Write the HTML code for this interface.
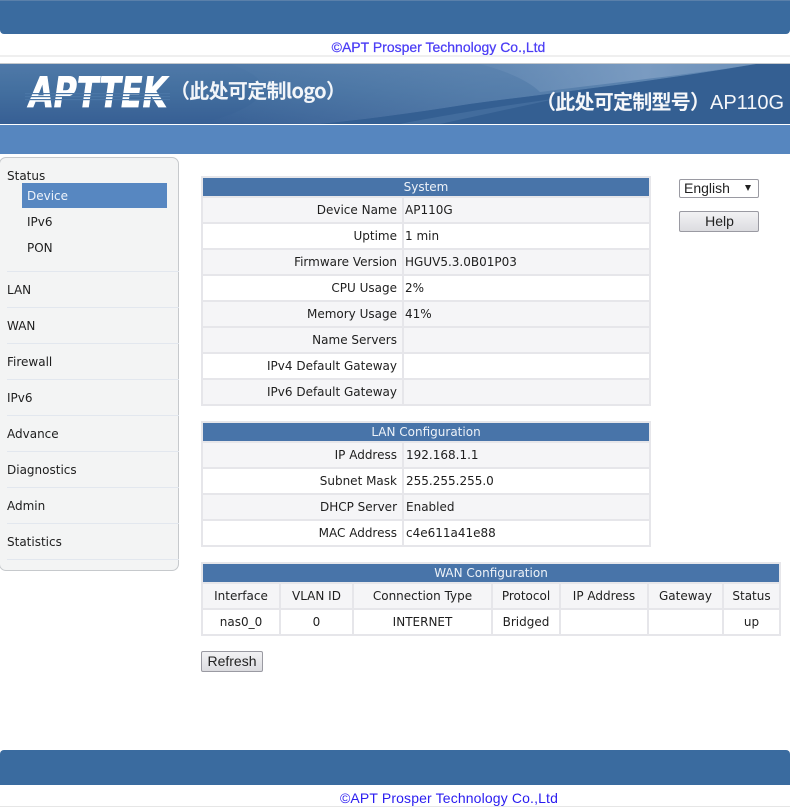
<!DOCTYPE html>
<html><head><meta charset="utf-8"><style>
html,body{margin:0;padding:0;background:#fff;width:790px;height:809px;overflow:hidden}
body{position:relative;font:12px/14px "DejaVu Sans","Noto Sans CJK SC",sans-serif;color:#1e1e1e}
.a{position:absolute}
.tb{position:absolute;background:#e6e6ea;}
.c{position:absolute;box-sizing:border-box;line-height:24px;white-space:nowrap;overflow:hidden;background:#f5f5f7}
.w{background:#fff}
.h{position:absolute;background:#4874a9;color:#edf2f8;text-align:center;line-height:18px;height:18px}
.l{text-align:right;padding-right:5px}
.v{padding-left:1px}
.m{position:absolute;left:7px;line-height:14px}
.s{position:absolute;left:7px;width:172px;height:1px;background:#e2e7ee}
.btn{position:absolute;box-sizing:border-box;border:1px solid #9a9aa2;border-radius:2px;background:linear-gradient(#f2f2f4,#dcdce0);text-align:center;font-family:"Liberation Sans",sans-serif;font-size:14px;color:#222}
</style></head><body>
<div class="a" style="left:0;top:0;width:790px;height:34px;background:#3a6b9f;border-top:1px solid #5a80aa;box-sizing:border-box;border-radius:0 0 4px 4px"></div>
<div class="a" style="left:0;top:39px;width:877px;text-align:center;font:14px/16px 'Liberation Sans',sans-serif;color:#4a3cf5;-webkit-text-stroke:.25px #4a3cf5">©APT Prosper Technology Co.,Ltd</div>
<div class="a" style="left:0;top:55px;width:790px;height:2px;background:#efefef"></div>
<div class="a" style="left:0;top:63px;width:790px;height:1px;background:#c4c8cc"></div>
<svg class="a" style="left:0;top:64px" width="790" height="60" viewBox="0 0 790 60">
<defs><linearGradient id="g" x1="0" y1="0" x2="0" y2="1"><stop offset="0" stop-color="#4f79a8"/><stop offset=".45" stop-color="#436f9f"/><stop offset="1" stop-color="#375f94"/></linearGradient>
<linearGradient id="k" x1="0" x2="1" y1="0" y2="0"><stop offset="0" stop-color="#6f93bb" stop-opacity="0"/><stop offset=".5" stop-color="#6f93bb" stop-opacity=".4"/><stop offset="1" stop-color="#6f93bb" stop-opacity=".6"/></linearGradient>
<linearGradient id="b" x1="0" x2="1" y1="0" y2="0"><stop offset="0" stop-color="#7c9dc3" stop-opacity=".15"/><stop offset=".6" stop-color="#7f9fc4" stop-opacity=".85"/><stop offset="1" stop-color="#7396bd" stop-opacity=".7"/></linearGradient></defs>
<rect width="790" height="60" fill="url(#g)"/>
<path d="M230 0H756C650 18 560 28 470 40C420 48 370 55 320 60H200C260 45 290 20 230 0Z" fill="url(#k)"/>
<path d="M756 0H790V60H320C370 55 420 48 470 40C560 28 650 18 756 0Z" fill="#345f92"/>
<path d="M400 60C440 52 500 42 560 34L440 60Z" fill="#4f79a8" opacity=".5"/>
<path d="M480 0H756C680 12 600 20 540 28C530 18 510 8 480 0Z" fill="url(#b)"/>
<g transform="translate(27 43) skewX(-8)"><text x="0" y="0" font-family="'DejaVu Sans',sans-serif" font-weight="bold" font-size="42" textLength="138" lengthAdjust="spacingAndGlyphs" fill="#fff" stroke="#fff" stroke-width=".7">APTTEK</text></g>
<rect x="25" y="29" width="145" height="1.2" fill="#4a76a6"/><rect x="25" y="32" width="145" height="1.2" fill="#4a76a6"/><rect x="25" y="35" width="145" height="1.2" fill="#4a76a6"/>
<text x="170" y="34" font-family="'Noto Sans CJK SC',sans-serif" font-weight="700" font-size="20" textLength="176" fill="#f2f5f9">（此处可定制logo）</text>
<text x="536" y="45" font-family="'Liberation Sans','Noto Sans CJK SC',sans-serif" font-weight="bold" font-size="20" textLength="174" fill="#f5f7fa">（此处可定制型号）</text>
<text x="710" y="45" font-family="'Liberation Sans',sans-serif" font-size="20" textLength="74" fill="#f5f7fa">AP110G</text>
</svg>
<div class="a" style="left:0;top:125px;width:790px;height:29px;background:#5686bf"></div>

<div class="a" style="left:-1px;top:157px;width:180px;height:414px;box-sizing:border-box;background:#f3f4f4;border:1px solid #c6c9cc;border-radius:7px"></div>
<div class="m" style="top:169px">Status</div>
<div class="a" style="left:22px;top:183px;width:145px;height:25px;background:#5787c1;color:#eef3fa;line-height:26px;padding-left:5px;box-sizing:border-box">Device</div>
<div class="m" style="left:27px;top:215px">IPv6</div>
<div class="m" style="left:27px;top:241px">PON</div>
<div class="s" style="top:271px"></div><div class="m" style="top:283px">LAN</div>
<div class="s" style="top:307px"></div><div class="m" style="top:319px">WAN</div>
<div class="s" style="top:343px"></div><div class="m" style="top:355px">Firewall</div>
<div class="s" style="top:379px"></div><div class="m" style="top:391px">IPv6</div>
<div class="s" style="top:415px"></div><div class="m" style="top:427px">Advance</div>
<div class="s" style="top:451px"></div><div class="m" style="top:463px">Diagnostics</div>
<div class="s" style="top:487px"></div><div class="m" style="top:499px">Admin</div>
<div class="s" style="top:523px"></div><div class="m" style="top:535px">Statistics</div>
<div class="s" style="top:559px"></div>

<div class="tb" style="left:201px;top:176px;width:450px;height:230px"></div>
<div class="h" style="left:203px;top:178px;width:446px">System</div>
<div class="c l" style="left:203px;top:198px;width:199px;height:24px">Device Name</div><div class="c v" style="left:404px;top:198px;width:245px;height:24px">AP110G</div>
<div class="c l w" style="left:203px;top:224px;width:199px;height:24px">Uptime</div><div class="c v w" style="left:404px;top:224px;width:245px;height:24px">1 min</div>
<div class="c l" style="left:203px;top:250px;width:199px;height:24px">Firmware Version</div><div class="c v" style="left:404px;top:250px;width:245px;height:24px">HGUV5.3.0B01P03</div>
<div class="c l w" style="left:203px;top:276px;width:199px;height:24px">CPU Usage</div><div class="c v w" style="left:404px;top:276px;width:245px;height:24px">2%</div>
<div class="c l" style="left:203px;top:302px;width:199px;height:24px">Memory Usage</div><div class="c v" style="left:404px;top:302px;width:245px;height:24px">41%</div>
<div class="c l" style="left:203px;top:328px;width:199px;height:24px">Name Servers</div><div class="c v" style="left:404px;top:328px;width:245px;height:24px"></div>
<div class="c l w" style="left:203px;top:354px;width:199px;height:24px">IPv4 Default Gateway</div><div class="c v w" style="left:404px;top:354px;width:245px;height:24px"></div>
<div class="c l" style="left:203px;top:380px;width:199px;height:24px">IPv6 Default Gateway</div><div class="c v" style="left:404px;top:380px;width:245px;height:24px"></div>

<div class="tb" style="left:201px;top:421px;width:450px;height:126px"></div>
<div class="h" style="left:203px;top:423px;width:446px">LAN Configuration</div>
<div class="c l" style="left:203px;top:443px;width:199px;height:24px">IP Address</div><div class="c v" style="left:404px;top:443px;width:245px;height:24px;padding-left:2px">192.168.1.1</div>
<div class="c l w" style="left:203px;top:469px;width:199px;height:24px">Subnet Mask</div><div class="c v w" style="left:404px;top:469px;width:245px;height:24px;padding-left:2px">255.255.255.0</div>
<div class="c l" style="left:203px;top:495px;width:199px;height:24px">DHCP Server</div><div class="c v" style="left:404px;top:495px;width:245px;height:24px;padding-left:2px">Enabled</div>
<div class="c l w" style="left:203px;top:521px;width:199px;height:24px">MAC Address</div><div class="c v w" style="left:404px;top:521px;width:245px;height:24px;padding-left:2px">c4e611a41e88</div>

<div class="tb" style="left:201px;top:562px;width:580px;height:74px"></div>
<div class="h" style="left:203px;top:564px;width:576px">WAN Configuration</div>
<div class="c" style="left:203px;top:584px;width:76px;height:24px;text-align:center">Interface</div>
<div class="c" style="left:281px;top:584px;width:71px;height:24px;text-align:center">VLAN ID</div>
<div class="c" style="left:354px;top:584px;width:137px;height:24px;text-align:center">Connection Type</div>
<div class="c" style="left:493px;top:584px;width:66px;height:24px;text-align:center">Protocol</div>
<div class="c" style="left:561px;top:584px;width:86px;height:24px;text-align:center">IP Address</div>
<div class="c" style="left:649px;top:584px;width:73px;height:24px;text-align:center">Gateway</div>
<div class="c" style="left:724px;top:584px;width:55px;height:24px;text-align:center">Status</div>
<div class="c w" style="left:203px;top:610px;width:76px;height:24px;text-align:center">nas0_0</div>
<div class="c w" style="left:281px;top:610px;width:71px;height:24px;text-align:center">0</div>
<div class="c w" style="left:354px;top:610px;width:137px;height:24px;text-align:center">INTERNET</div>
<div class="c w" style="left:493px;top:610px;width:66px;height:24px;text-align:center">Bridged</div>
<div class="c w" style="left:561px;top:610px;width:86px;height:24px"></div>
<div class="c w" style="left:649px;top:610px;width:73px;height:24px"></div>
<div class="c w" style="left:724px;top:610px;width:55px;height:24px;text-align:center">up</div>

<div class="a" style="left:679px;top:179px;width:80px;height:19px;box-sizing:border-box;border:1px solid #9a9aa2;border-radius:2px;background:#fff;font:14px/17px 'Liberation Sans',sans-serif;padding-left:4px;color:#222">English<span class="a" style="left:65px;top:5px;width:0;height:0;border-left:3.5px solid transparent;border-right:3.5px solid transparent;border-top:6px solid #222"></span></div>
<div class="btn" style="left:679px;top:211px;width:80px;height:21px;line-height:19px;padding-left:1px">Help</div>
<div class="btn" style="left:201px;top:651px;width:62px;height:21px;line-height:19px">Refresh</div>

<div class="a" style="left:0;top:750px;width:790px;height:35px;background:#3a6b9f;border-radius:4px 4px 0 0"></div>
<div class="a" style="left:0;top:790px;width:898px;text-align:center;font:14px/16px 'Liberation Sans',sans-serif;color:#2a1cf0;letter-spacing:.14px">©APT Prosper Technology Co.,Ltd</div>
<div class="a" style="left:0;top:806px;width:790px;height:1px;background:#e6e6e6"></div>
</body></html>
